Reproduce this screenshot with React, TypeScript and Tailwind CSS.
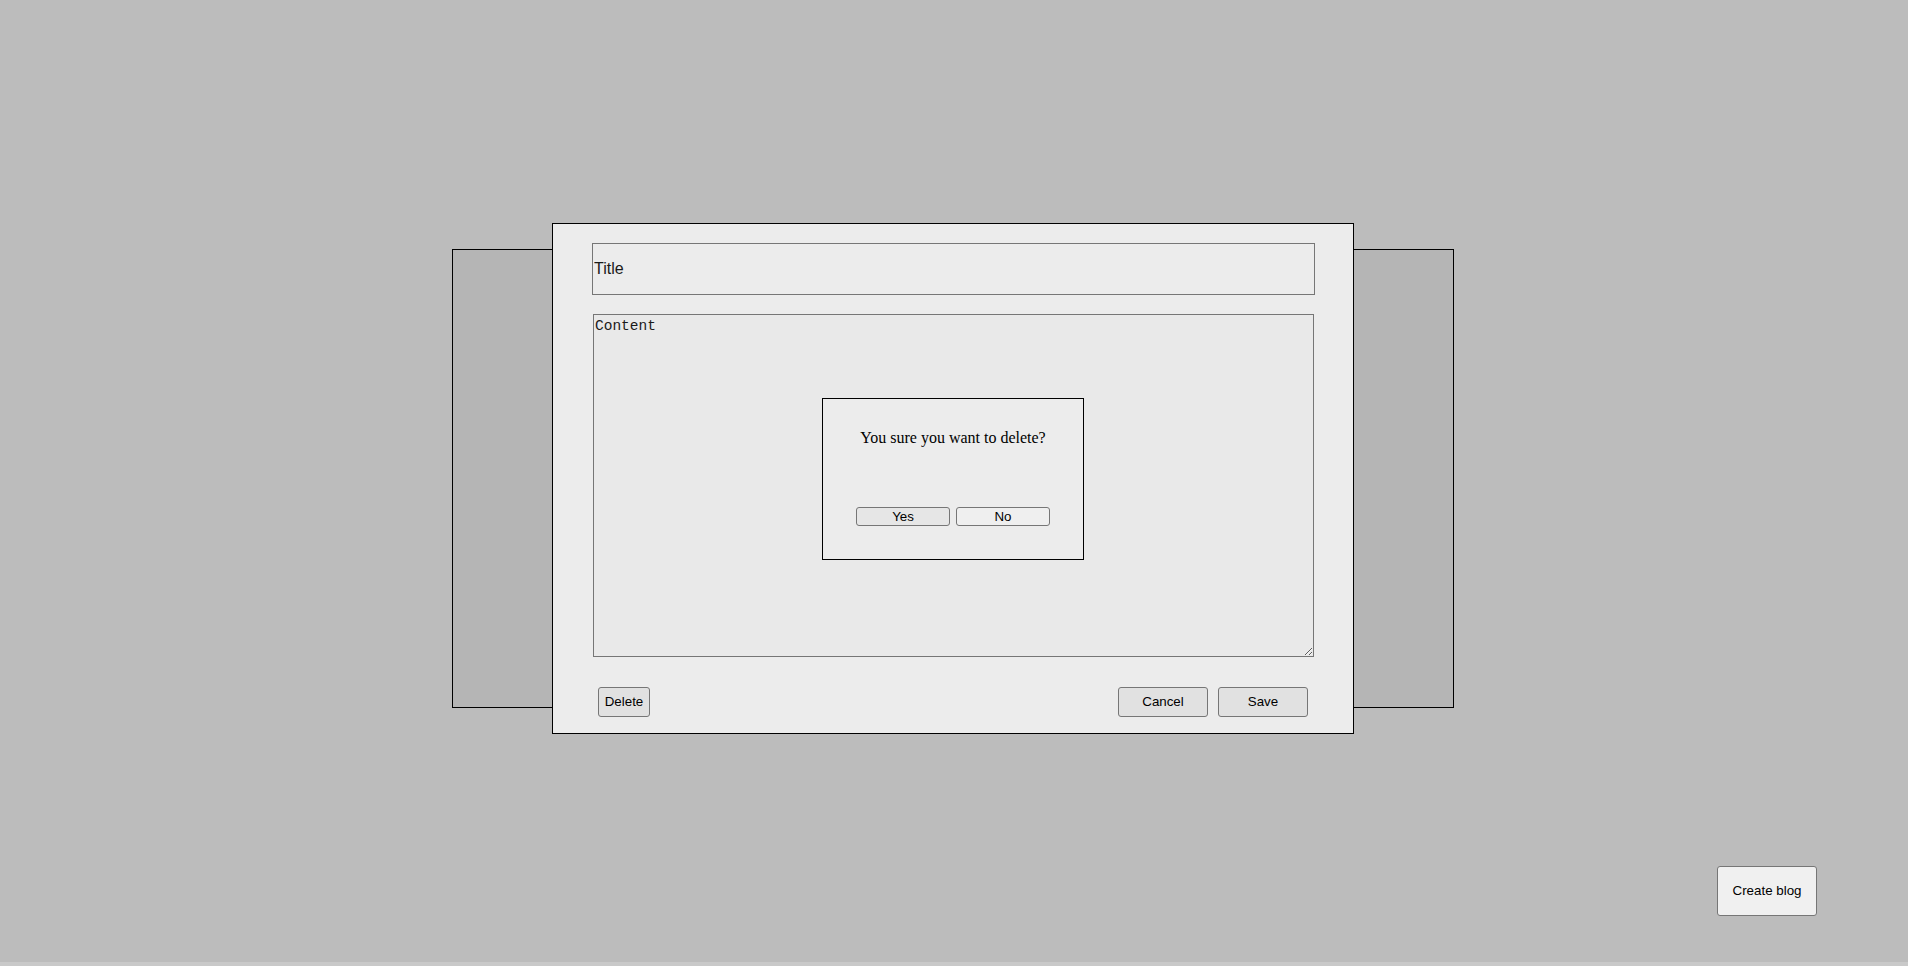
import { useState } from 'react'

export default function App() {
  const [title, setTitle] = useState('')
  const [content, setContent] = useState('')

  const btn =
    'border border-[#767676] rounded-[3px] text-[13.33px] text-black font-["Liberation_Sans",Arial,sans-serif] leading-none'

  return (
    <div className="w-[1908px] h-[966px] flex flex-col bg-[#c9c9c9] overflow-hidden">
      <div className="relative h-[962px] bg-[#bcbcbc] flex items-center justify-center pb-[5px] pr-[2px]">
        {/* blog card behind the modal */}
        <div className="absolute w-[1002px] h-[459px] left-[452px] top-[249px] border border-black bg-[#b5b5b5]" />

        {/* editor modal */}
        <div className="relative z-10 w-[802px] h-[511px] border border-black bg-[#ececec] flex flex-col pt-[19px] pl-[39px] pr-[38px]">
          <input
            value={title}
            onChange={(e) => setTitle(e.target.value)}
            placeholder="Title"
            className='w-[723px] h-[52px] border border-[#767676] bg-[#ececec] px-[1px] text-[16px] font-["Liberation_Sans",Arial,sans-serif] text-black placeholder:text-[#1a1a1a] outline-none'
          />
          <textarea
            value={content}
            onChange={(e) => setContent(e.target.value)}
            placeholder="Content"
            className='mt-[19px] ml-[1px] w-[721px] h-[343px] border border-[#767676] bg-[#e9e9e9] px-[1px] py-[2px] text-[14.5px] leading-[18px] font-["Liberation_Mono","DejaVu_Sans_Mono",monospace] text-black placeholder:text-[#1a1a1a] outline-none resize'
          />
          <div className="mt-[30px] flex items-center justify-between pl-[6px] pr-[7px]">
            <button className={`${btn} w-[52px] h-[30px] bg-[#e1e1e1]`}>Delete</button>
            <div className="flex gap-[10px]">
              <button className={`${btn} w-[90px] h-[30px] bg-[#e1e1e1]`}>Cancel</button>
              <button className={`${btn} w-[90px] h-[30px] bg-[#e1e1e1]`}>Save</button>
            </div>
          </div>
        </div>

        {/* confirm dialog */}
        <div className="absolute z-20 left-[822px] top-[398px] w-[262px] h-[162px] border border-black bg-[#ececec] flex flex-col items-center">
          <p className='mt-[29px] text-[16px] leading-[20px] text-black font-["Liberation_Serif","Times_New_Roman",serif]'>
            You sure you want to delete?
          </p>
          <div className="mt-[59px] flex gap-[6px]">
            <button className={`${btn} w-[94px] h-[19px] bg-[#e6e6e6]`}>Yes</button>
            <button className={`${btn} w-[94px] h-[19px] bg-[#efefef]`}>No</button>
          </div>
        </div>

        <button
          className={`${btn} absolute z-10 right-[91px] bottom-[46px] w-[100px] h-[50px] bg-[#f0f0f0]`}
        >
          Create blog
        </button>
      </div>
    </div>
  )
}
